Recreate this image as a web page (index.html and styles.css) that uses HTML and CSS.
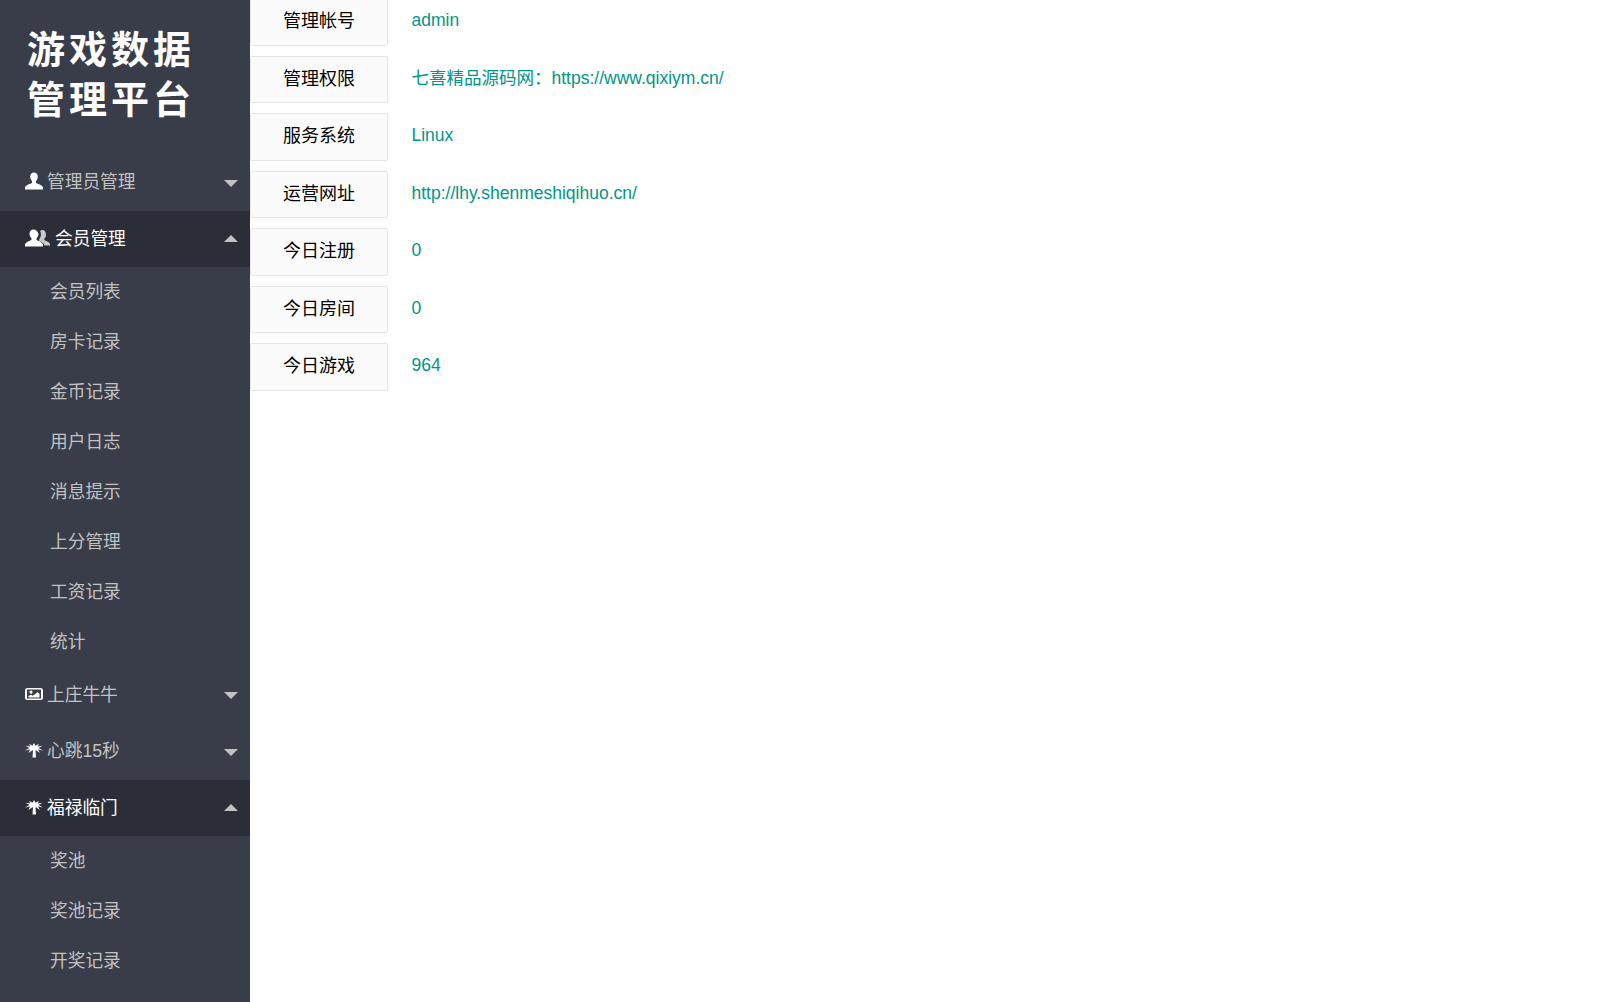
FILE: index.html
```html
<!DOCTYPE html>
<html>
<head>
	<meta charset="utf-8">
	<title>游戏数据管理平台</title>
	<link rel="stylesheet" href="styles.css">
</head>
<body>
<div class="side">
  <div class="logo">游戏数据<br>管理平台</div>
  <div class="nav">
    <a class="item"><svg class="ico" viewBox="0 0 18 18"><path d="M9 .5C6.600 .5 5.200 2.300 5.200 4.600c0 1.700.7 3.300 1.800 4.300v2c-1.500.9-6 1.600-7 4.600v2h18v-2c-1-3-5.500-3.700-7-4.600v-2c1.100-1 1.800-2.600 1.800-4.300C12.800 2.300 11.400 .5 9 .5z"/></svg>管理员管理<i class="down"></i></a>
    <a class="item open"><svg class="ico wide" viewBox="0 0 25 18"><path d="M17.500 1c-1 0-1.800.4-2.400 1.100.5 .9.8 2 .8 3.400 0 1.700-.6 3.300-1.600 4.500v2c1.700 1 4.500 1.700 5.200 4.500H25v-1.500c-.6-2.300-4.500-3.300-5.700-4.100V9.600c.9-.8 1.700-2.100 1.700-3.700C21 3.100 19.700 1 17.500 1z" opacity=".75"/><path d="M8.500 .5C6 .5 4.500 2.400 4.500 4.700c0 1.700.7 3.300 1.900 4.300v2c-1.500.9-5.400 1.800-6.400 4.500v2h18v-2c-1-2.700-4.900-3.600-6.400-4.500V9c1.200-1 1.900-2.600 1.900-4.300C12.500 2.400 11 .5 8.500 .5z"/></svg>会员管理<i class="up"></i></a>
    <div class="sub">
      <a>会员列表</a>
      <a>房卡记录</a>
      <a>金币记录</a>
      <a>用户日志</a>
      <a>消息提示</a>
      <a>上分管理</a>
      <a>工资记录</a>
      <a>统计</a>
    </div>
    <a class="item"><svg class="ico" viewBox="0 0 18 18"><path fill-rule="evenodd" d="M2.500 3h13A2.500 2.500 0 0 1 18 5.500v7a2.500 2.500 0 0 1-2.500 2.500h-13A2.500 2.500 0 0 1 0 12.500v-7A2.500 2.500 0 0 1 2.500 3zM2 4.500v9h14v-9zM6 5.500a1.600 1.600 0 1 1 0 3.200 1.600 1.600 0 0 1 0-3.200zM3.500 12.500v-1.500l2.500-1.300 1.800 1 4.700-3.500 2 1.500v3.800z"/></svg>上庄牛牛<i class="down"></i></a>
    <a class="item"><svg class="ico" viewBox="0 -1 18 16"><use href="#palm"/></svg>心跳15秒<i class="down"></i></a>
    <a class="item open"><svg class="ico" viewBox="0 -1 18 16"><path id="palm" d="M9 0L10.500 2.800 14 .8 12.500 3.500 17.500 2.800 13.500 5 18 7.500 13 6.500 15 10 11 7.200 10.500 7.500 11 14.500H7.500L8 7.500 7.500 7.200 3.500 10 5 6.500 0 7.500 4.500 5 .5 2.800 5.500 3.500 4 .8 7.500 2.800z"/></svg>福禄临门<i class="up"></i></a>
    <div class="sub">
      <a>奖池</a>
      <a>奖池记录</a>
      <a>开奖记录</a>
    </div>
  </div>
</div>
<div class="main">
  <div class="row"><label>管理帐号</label><span>admin</span></div>
  <div class="row"><label>管理权限</label><span>七喜精品源码网：https://www.qixiym.cn/</span></div>
  <div class="row"><label>服务系统</label><span>Linux</span></div>
  <div class="row"><label>运营网址</label><span>http://lhy.shenmeshiqihuo.cn/</span></div>
  <div class="row"><label>今日注册</label><span>0</span></div>
  <div class="row"><label>今日房间</label><span>0</span></div>
  <div class="row"><label>今日游戏</label><span>964</span></div>
</div>
</body>
</html>
```

FILE: styles.css
```css
html,body{margin:0;padding:0;height:100%;overflow:hidden;}
body{
  display:flex;
  background:#fff;
  font-family:"Liberation Sans","Noto Sans CJK SC",sans-serif;
  font-size:17.5px;
}
.side{
  width:250px;
  height:1002px;
  flex:none;
  background:#393d49;
  color:#c2c2c2;
  font-size:17.7px;
}
.logo{
  height:154.67px;
  box-sizing:border-box;
  padding:22px 0 0 27px;
  color:#fff;
  font-family:"Noto Sans CJK SC",sans-serif;
  font-size:38px;
  font-weight:bold;
  letter-spacing:4px;
  line-height:50px;
}
.item{
  display:flex;
  align-items:center;
  height:56.33px;
  box-sizing:border-box;
  padding:0 0 5px 25px;
  position:relative;
}
.item.open{background:#2b2e38;color:#fff;}
.ico{width:18px;height:18px;fill:#fff;margin:2px 4px 0 0;flex:none;}
.ico.wide{width:25px;margin-right:5px;}
.item i{
  position:absolute;
  right:12px;
  top:25px;
  width:0;
  height:0;
  border-left:7px solid transparent;
  border-right:7px solid transparent;
}
.item i.down{border-top:7px solid #c2c2c2;}
.item i.up{border-bottom:7px solid #c2c2c2;top:24px;}
.sub a{
  display:block;
  height:50px;
  line-height:50px;
  padding-left:50px;
}
.main{
  flex:1;
  margin-top:-1.55px;
}
.row{
  display:flex;
  height:47.4px;
  margin-bottom:10.1px;
}
.row label{
  width:138px;
  box-sizing:border-box;
  font-size:18px;
  line-height:44px;
  text-align:center;
  color:#000;
  background:#fbfbfb;
  border:1px solid #e6e6e6;
  border-radius:2px;
}
.row span{
  margin-left:23.5px;
  line-height:44px;
  color:#009688;
}
```
